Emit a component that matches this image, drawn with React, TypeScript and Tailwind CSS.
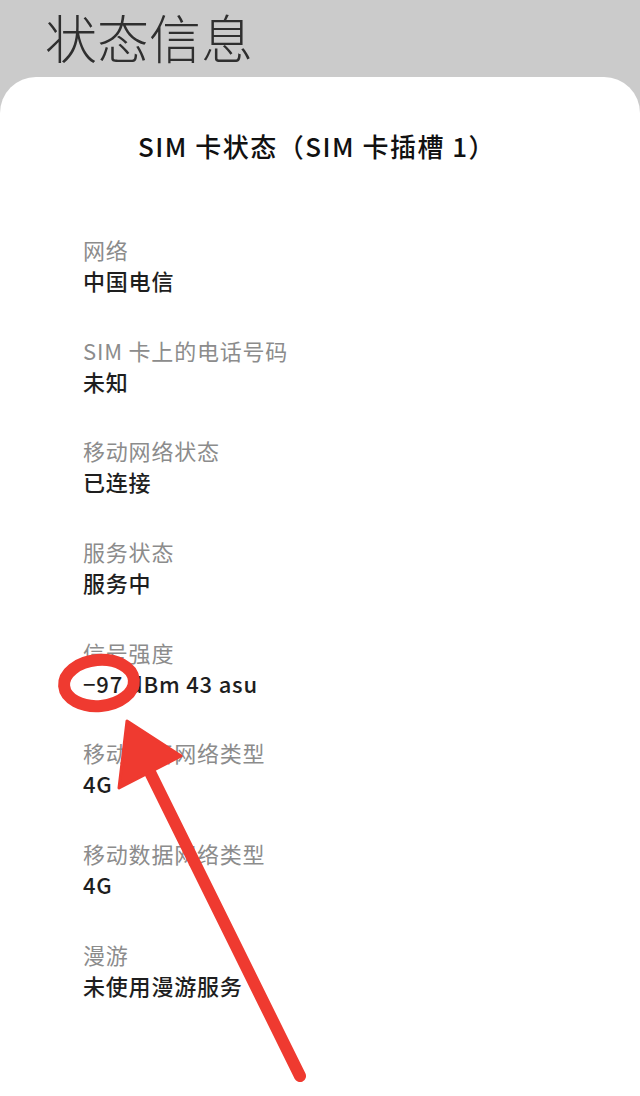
const rows = [
  { label: "网络", value: "中国电信" },
  { label: "SIM 卡上的电话号码", value: "未知" },
  { label: "移动网络状态", value: "已连接" },
  { label: "服务状态", value: "服务中" },
  { label: "信号强度", value: "−97 dBm 43 asu" },
  { label: "移动语音网络类型", value: "4G" },
  { label: "移动数据网络类型", value: "4G" },
  { label: "漫游", value: "未使用漫游服务" },
];

const font = { fontFamily: '"Noto Sans CJK SC", "Noto Sans", sans-serif' };

export default function App() {
  return (
    <div className="relative w-[640px] h-[1096px] overflow-hidden bg-[#cbcbcb]" style={font}>
      <div className="h-[77px] pl-[45px] flex items-center">
        <h1 className="text-[52px] leading-none font-light text-[#2f2f2f] -mt-[3px]">状态信息</h1>
      </div>

      <div className="bg-white rounded-t-[36px] h-[1019px] flex flex-col">
        <div className="pt-[53px] pr-[6px] text-center text-[26px] leading-[32px] font-medium tracking-[1.5px] text-[#111]">
          SIM 卡状态（SIM 卡插槽 1）
        </div>

        <div className="mt-[72px] pl-[83px] flex flex-col gap-[38.7px]">
          {rows.map((r) => (
            <div key={r.label} className="flex flex-col">
              <span className="text-[22px] leading-[31px] tracking-[0.8px] text-[#8c8c8c]">{r.label}</span>
              <span className="text-[22px] leading-[31px] tracking-[0.8px] font-medium text-[#1e1e1e]">{r.value}</span>
            </div>
          ))}
        </div>
      </div>

      {/* hand drawn annotation over the screenshot */}
      <svg className="absolute inset-0 pointer-events-none" width="640" height="1096" viewBox="0 0 640 1096">
        <ellipse
          cx="99"
          cy="683"
          rx="35"
          ry="23"
          transform="rotate(-5 99 683)"
          fill="none"
          stroke="#ef3a30"
          strokeWidth="12"
        />
        <line x1="300" y1="1076" x2="140" y2="752" stroke="#ef3a30" strokeWidth="12" strokeLinecap="round" />
        <polygon points="127,721 119,788 181,756" fill="#ef3a30" strokeLinejoin="round" stroke="#ef3a30" strokeWidth="3" />
      </svg>
    </div>
  );
}
